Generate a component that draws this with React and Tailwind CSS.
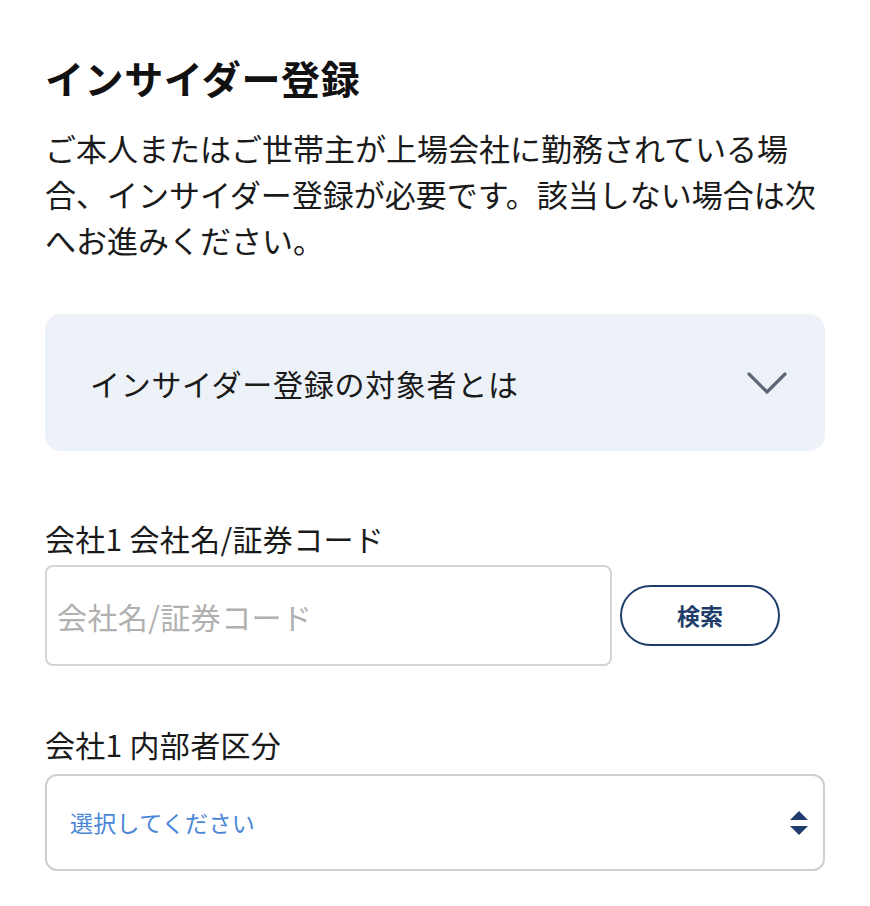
import { useState } from "react";

const font = { fontFamily: '"Noto Sans CJK JP", "Noto Sans", sans-serif' };

export default function App() {
  const [open, setOpen] = useState(false);
  const [company, setCompany] = useState("");

  return (
    <div className="min-h-screen bg-white text-[#111] px-[45px] pt-[52px]" style={font}>
      {/* Header */}
      <h1 className="text-[39px] font-bold leading-[50px] tracking-[0.6px]">インサイダー登録</h1>
      <p className="mt-[23px] text-[31px] leading-[46px] text-[#1a1a1a]">
        ご本人またはご世帯主が上場会社に勤務されている場合、インサイダー登録が必要です。該当しない場合は次へお進みください。
      </p>

      {/* Accordion */}
      <button
        onClick={() => setOpen(!open)}
        className="mt-[51px] w-full h-[137px] rounded-[16px] bg-[#edf2f8] flex items-center justify-between pl-[45px] pr-[38px] text-left"
      >
        <span className="text-[30px] leading-[40px] tracking-[0.7px] text-[#1a1a1a]">インサイダー登録の対象者とは</span>
        <svg width="40" height="24" viewBox="0 0 40 24" fill="none" className={open ? "rotate-180" : ""}>
          <path d="M2 3 L20 21 L38 3" stroke="#5d6775" strokeWidth="3.2" strokeLinecap="round" strokeLinejoin="round" />
        </svg>
      </button>

      {/* Company name */}
      <div className="mt-[67px]">
        <label className="block text-[30px] leading-[40px] tracking-[0.3px] text-[#1a1a1a]">会社1 会社名/証券コード</label>
        <div className="mt-[7px] flex items-center gap-[8px]">
          <input
            value={company}
            onChange={(e) => setCompany(e.target.value)}
            placeholder="会社名/証券コード"
            className="w-[567px] h-[101px] rounded-[8px] border-2 border-[#d4d4d4] px-[10px] text-[30px] tracking-[0.4px] placeholder:text-[#b0b0b0] outline-none"
            style={font}
          />
          <button className="w-[160px] h-[61px] rounded-full border-2 border-[#1f3d6b] text-[#1f3d6b] text-[23px] font-bold">
            検索
          </button>
        </div>
      </div>

      {/* Insider category */}
      <div className="mt-[58px]">
        <label className="block text-[30px] leading-[40px] tracking-[0.3px] text-[#1a1a1a]">会社1 内部者区分</label>
        <div className="mt-[10px] relative w-full h-[97px] rounded-[12px] border-2 border-[#cfcfcf] flex items-center justify-between pl-[23px] pr-[14px]">
          <span className="text-[23px] tracking-[0.3px] text-[#4a86d8]">選択してください</span>
          <svg width="20" height="28" viewBox="0 0 20 28">
            <path d="M10 2 L19 11 L1 11 Z" fill="#1f3d6b" />
            <path d="M1 17 L19 17 L10 26 Z" fill="#1f3d6b" />
          </svg>
        </div>
      </div>
    </div>
  );
}
